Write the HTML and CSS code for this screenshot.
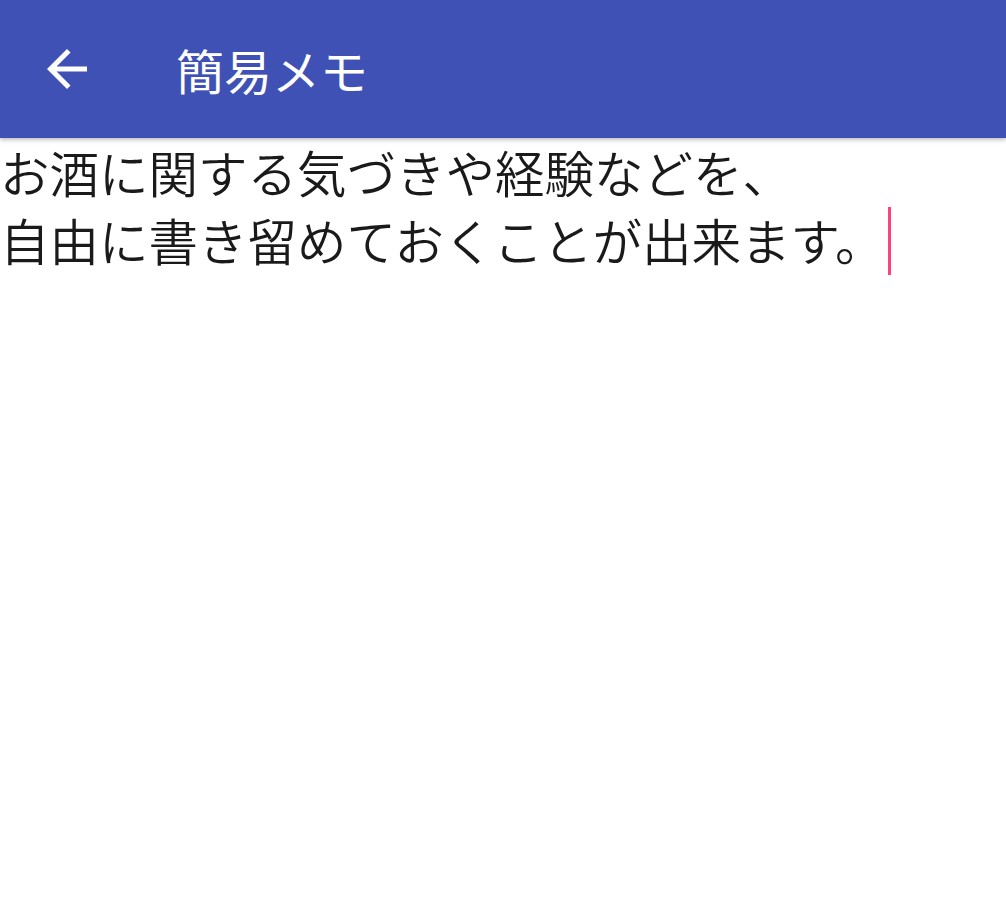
FILE: index.html
```html
<html lang="ja">
<head>
  <meta charset="UTF-8" />
  <meta name="viewport" content="width=device-width, initial-scale=1.0" />
  <title>簡易メモ</title>
  <link rel="stylesheet" href="styles.css">
</head>
<body>
  <header class="toolbar">
    <button class="nav-back" aria-label="戻る">
      <svg viewBox="0 0 24 24" width="60" height="60">
        <path d="M20 11H7.83l5.59-5.59L12 4l-8 8 8 8 1.41-1.41L7.83 13H20v-2z" fill="#fff"/>
      </svg>
    </button>
    <h1 class="toolbar-title">簡易メモ</h1>
  </header>

  <main class="memo">
    <p class="memo-text">お酒に関する気づきや経験などを、<br>自由に書き留めておくことが出来ます。<span class="caret"></span></p>
  </main>
</body>
</html>
```

FILE: styles.css
```css
body {
  margin: 0;
  padding: 0;
  background-color: #ffffff;
  font-family: "Noto Sans CJK JP", "Noto Sans", sans-serif;
}

.toolbar {
  height: 138px;
  background-color: #3f51b5;
  display: flex;
  align-items: center;
  box-shadow: 0 2px 4px rgba(0, 0, 0, 0.25);
  position: relative;
}

.nav-back {
  background: none;
  border: 0;
  padding: 0;
  margin: 0 0 0 37px;
  width: 60px;
  height: 60px;
  display: flex;
}

.toolbar-title {
  margin: 0 0 0 79px;
  color: #ffffff;
  font-size: 48px;
  font-weight: normal;
  line-height: 1;
}

.memo {
  padding: 0;
}

.memo-text {
  margin: 0;
  padding-top: 0;
  font-size: 49.5px;
  font-weight: 350;
  line-height: 68px;
  color: #1a1a1a;
}

.caret {
  display: inline-block;
  width: 3px;
  height: 68px;
  margin-left: 3px;
  background-color: #ff4081;
  vertical-align: -14px;
}
```
